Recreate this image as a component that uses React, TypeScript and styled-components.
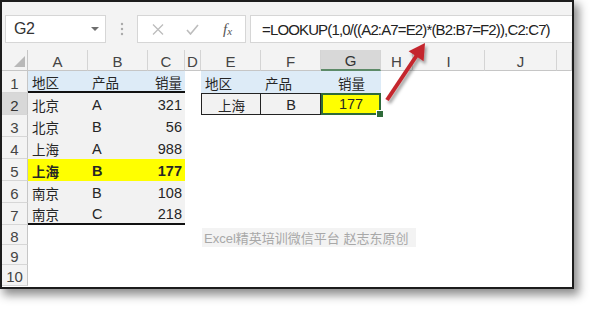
import styled, { createGlobalStyle, css } from 'styled-components'

type Fill = 'none' | 'blue' | 'gray' | 'yellow'
type Align = 'left' | 'center' | 'right'

type CellSpec = {
	v?: string
	fill?: Fill
	align?: Align
	bold?: boolean
	thick?: boolean
	boxed?: 'first' | 'rest'
	active?: boolean
}

const fills: Record<Fill, string> = {
	none: '#ffffff',
	blue: '#ddebf7',
	gray: '#f2f2f2',
	yellow: '#ffff00',
}

const LETTERS = ['A', 'B', 'C', 'D', 'E', 'F', 'G', 'H', 'I', 'J', '']
const ROWS = 10

const source = [
	['北京', 'A', '321'],
	['北京', 'B', '56'],
	['上海', 'A', '988'],
	['上海', 'B', '177'],
	['南京', 'B', '108'],
	['南京', 'C', '218'],
]

const blanks = (n: number): CellSpec[] => Array.from({ length: n }, () => ({}))

const buildRows = (): CellSpec[][] => {
	const rows: CellSpec[][] = []
	rows.push([
		{ v: '地区', fill: 'blue', thick: true },
		{ v: '产品', fill: 'blue', thick: true },
		{ v: '销量', fill: 'blue', align: 'right', thick: true },
		{},
		{ v: '地区', fill: 'blue' },
		{ v: '产品', fill: 'blue' },
		{ v: '销量', fill: 'blue', align: 'center' },
		...blanks(4),
	])
	source.forEach(([area, product, sales], i) => {
		const hit = i === 3
		const last = i === source.length - 1
		const fill: Fill = hit ? 'yellow' : 'gray'
		const row: CellSpec[] = [
			{ v: area, fill, bold: hit, thick: last },
			{ v: product, fill, bold: hit, thick: last },
			{ v: sales, fill, bold: hit, thick: last, align: 'right' },
			{},
		]
		if (i === 0) {
			row.push(
				{ v: '上海', fill: 'gray', align: 'center', boxed: 'first' },
				{ v: 'B', fill: 'gray', align: 'center', boxed: 'rest' },
				{ v: '177', fill: 'yellow', align: 'center', active: true },
				...blanks(4),
			)
		} else {
			row.push(...blanks(7))
		}
		rows.push(row)
	})
	while (rows.length < ROWS) rows.push(blanks(11))
	return rows
}

const hasCjk = (s?: string) => !!s && /[\u4e00-\u9fff]/.test(s)

export default function App() {
	const rows = buildRows()
	return (
		<Page>
			<GlobalStyle />
			<Window>
				<Toolbar>
					<NameBox>
						G2
						<Caret />
					</NameBox>
					<Grip>
						<svg width='4' height='14' viewBox='0 0 4 14'>
							<circle cx='2' cy='2' r='1.2' fill='#a9a9a9' />
							<circle cx='2' cy='7' r='1.2' fill='#a9a9a9' />
							<circle cx='2' cy='12' r='1.2' fill='#a9a9a9' />
						</svg>
					</Grip>
					<FuncBox>
						<IconSlot>
							<svg width='12' height='11' viewBox='0 0 12 11'>
								<path d='M1 0.5 L11 10.5 M11 0.5 L1 10.5' stroke='#bdbdbd' strokeWidth='1.3' fill='none' />
							</svg>
						</IconSlot>
						<IconSlot>
							<svg width='13' height='11' viewBox='0 0 13 11'>
								<path d='M1 6 L4.5 10 L12 1' stroke='#bdbdbd' strokeWidth='1.6' fill='none' />
							</svg>
						</IconSlot>
						<IconSlot>
							<Fx>
								f<sub>x</sub>
							</Fx>
						</IconSlot>
					</FuncBox>
					<FormulaBox>=LOOKUP(1,0/((A2:A7=E2)*(B2:B7=F2)),C2:C7)</FormulaBox>
				</Toolbar>

				<Sheet>
					<Corner>
						<svg width='11' height='11' viewBox='0 0 11 11'>
							<polygon points='11,0 11,11 0,11' fill='#b8b8b8' />
						</svg>
					</Corner>
					{LETTERS.map((l, i) => (
						<ColHeader key={i} $selected={l === 'G'}>
							{l}
						</ColHeader>
					))}
					{rows.map((row, r) => [
						<RowHeader key={`h${r}`} $selected={r === 1}>
							{r + 1}
						</RowHeader>,
						...row.map((c, ci) => (
							<Cell
								key={`${r}-${ci}`}
								$fill={c.fill ?? 'none'}
								$align={c.align ?? 'left'}
								$bold={c.bold}
								$cjk={hasCjk(c.v)}
								$thick={c.thick}
								$boxed={c.boxed}
								$active={c.active}
							>
								{c.v}
								{c.active && <FillHandle />}
							</Cell>
						)),
					])}
				</Sheet>

				<Watermark>Excel精英培训微信平台 赵志东原创</Watermark>
			</Window>

			<Arrow width='70' height='80' viewBox='0 0 70 80'>
				<defs>
					<filter id='arrowShadow' x='-30%' y='-30%' width='160%' height='160%'>
						<feDropShadow dx='2' dy='3' stdDeviation='1.6' floodColor='#000' floodOpacity='0.35' />
					</filter>
				</defs>
				<g filter='url(#arrowShadow)'>
					<line x1='12' y1='65' x2='42' y2='20' stroke='#c4272d' strokeWidth='4' />
					<polygon points='50,8 48.6,26.3 33.6,16.3' fill='#c4272d' />
				</g>
			</Arrow>
		</Page>
	)
}

const GlobalStyle = createGlobalStyle`
	html, body {
		margin: 0;
		padding: 0;
		background: #ffffff;
	}
	body {
		font-family: 'Liberation Sans', 'Noto Sans CJK SC', sans-serif;
		color: #262626;
	}
`

const Page = styled.div`
	position: relative;
	width: 595px;
	height: 310px;
	overflow: hidden;
	background: #ffffff;
`

const Window = styled.div`
	position: relative;
	width: 574px;
	height: 289px;
	box-sizing: border-box;
	border: 2px solid #1c1c1c;
	display: flex;
	flex-direction: column;
	background: #ffffff;
	box-shadow: 4px 5px 9px 1px rgba(0, 0, 0, 0.45);
	overflow: hidden;
`

const Toolbar = styled.div`
	height: 48px;
	flex: none;
	box-sizing: border-box;
	display: flex;
	align-items: flex-end;
	padding: 0 0 7px 3px;
	background: #f3f3f3;
`

const Box = styled.div`
	height: 28px;
	box-sizing: border-box;
	border: 1px solid #d6d6d6;
	background: #ffffff;
	display: flex;
	align-items: center;
`

const NameBox = styled(Box)`
	width: 101px;
	justify-content: space-between;
	padding: 0 6px 0 8px;
	font-size: 16px;
	color: #333333;
	letter-spacing: -0.5px;
`

const Caret = styled.span`
	width: 0;
	height: 0;
	border-left: 4px solid transparent;
	border-right: 4px solid transparent;
	border-top: 4px solid #6e6e6e;
`

const Grip = styled.div`
	width: 31px;
	height: 28px;
	display: flex;
	align-items: center;
	justify-content: center;
`

const FuncBox = styled(Box)`
	width: 109px;
	padding-left: 2px;
`

const IconSlot = styled.div`
	width: 36px;
	display: flex;
	justify-content: center;
	align-items: center;
`

const Fx = styled.span`
	font-family: 'Liberation Serif', serif;
	font-style: italic;
	font-size: 15px;
	color: #555555;
	sub {
		font-size: 11px;
		vertical-align: -1px;
	}
`

const FormulaBox = styled(Box)`
	flex: 1;
	margin-left: 4px;
	border-right: none;
	padding-left: 11px;
	font-size: 15px;
	letter-spacing: -0.86px;
	color: #222222;
	white-space: nowrap;
`

const Sheet = styled.div`
	flex: 1;
	display: grid;
	grid-template-columns: 26px 60px 60px 37px 16px 60px 60px 60px 32px 72px 72px 1fr;
	grid-template-rows: 21px repeat(7, 22px) 20px 20px 21px;
	overflow: hidden;
`

const headerBase = css`
	box-sizing: border-box;
	display: flex;
	align-items: center;
	justify-content: center;
	background: #f3f3f3;
	color: #444444;
	font-size: 15px;
`

const Corner = styled.div`
	${headerBase};
	align-items: flex-end;
	justify-content: flex-end;
	padding: 0 2px 3px 0;
	border-right: 1px solid #c6c6c6;
	border-bottom: 1px solid #c6c6c6;
`

const ColHeader = styled.div<{ $selected?: boolean }>`
	${headerBase};
	padding-top: 2px;
	border-right: 1px solid #d4d4d4;
	border-bottom: 1px solid #c6c6c6;
	${(p) =>
		p.$selected &&
		css`
			background: #d8d8d8;
			border-bottom: 2px solid #5d8a68;
			color: #333333;
		`}
`

const RowHeader = styled.div<{ $selected?: boolean }>`
	${headerBase};
	font-size: 15px;
	padding-top: 3px;
	border-right: 1px solid #c6c6c6;
	border-bottom: 1px solid #d6d6d6;
	${(p) =>
		p.$selected &&
		css`
			background: #d8d8d8;
			color: #333333;
		`}
`

const Cell = styled.div<{
	$fill: Fill
	$align: Align
	$bold?: boolean
	$cjk?: boolean
	$thick?: boolean
	$boxed?: 'first' | 'rest'
	$active?: boolean
}>`
	position: relative;
	box-sizing: border-box;
	min-width: 0;
	display: flex;
	align-items: center;
	justify-content: ${(p) => (p.$align === 'center' ? 'center' : p.$align === 'right' ? 'flex-end' : 'flex-start')};
	padding: 1px 3px 0 4px;
	background: ${(p) => fills[p.$fill]};
	font-size: ${(p) => (p.$cjk ? 13.5 : 14.5)}px;
	font-weight: ${(p) => (p.$bold ? 700 : 400)};
	white-space: nowrap;
	${(p) =>
		p.$thick &&
		css`
			border-bottom: 2px solid #111111;
		`}
	${(p) =>
		p.$boxed &&
		css`
			border-top: 1px solid #222222;
			border-right: 1px solid #222222;
			border-bottom: 1px solid #222222;
			border-left: ${p.$boxed === 'first' ? '1px solid #222222' : 'none'};
		`}
	${(p) =>
		p.$active &&
		css`
			z-index: 2;
			border: 2px solid #2f6b3a;
			padding: 0;
		`}
`

const FillHandle = styled.span`
	position: absolute;
	right: -5px;
	bottom: -5px;
	width: 6px;
	height: 6px;
	background: #2f6b3a;
	border: 1px solid #ffffff;
`

const Watermark = styled.div`
	position: absolute;
	left: 200px;
	top: 226px;
	height: 19px;
	display: flex;
	align-items: center;
	padding: 0 8px 0 2px;
	background: #f3f3f3;
	color: #a8a8a8;
	font-size: 13px;
	white-space: nowrap;
`

const Arrow = styled.svg`
	position: absolute;
	left: 375px;
	top: 35px;
	overflow: visible;
`
